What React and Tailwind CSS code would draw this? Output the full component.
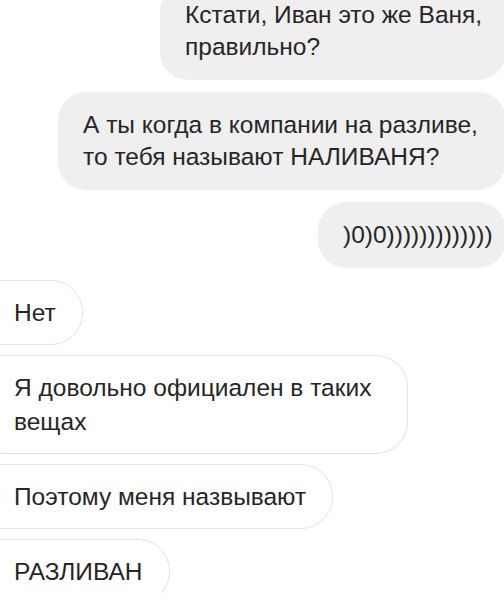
import React from 'react';

const outgoing = [
  { id: 1, text: 'Кстати, Иван это же Ваня, правильно?', width: 'w-[346px]', extra: '-mt-[18px]' },
  { id: 2, text: 'А ты когда в компании на разливе, то тебя называют НАЛИВАНЯ?', width: 'w-[448px]', extra: '' },
  { id: 3, text: ')0)0)))))))))))))', width: 'w-[188px]', extra: 'whitespace-nowrap' },
];

const incoming = [
  { id: 4, text: 'Нет', width: '' },
  { id: 5, text: 'Я довольно официален в таких вещах', width: 'w-[438px]' },
  { id: 6, text: 'Поэтому меня назвывают', width: '' },
  { id: 7, text: 'РАЗЛИВАН', width: '' },
];

const App = () => {
  return (
    <div
      className="h-[593px] w-[504px] overflow-hidden bg-white text-[24.5px] text-[#262626]"
      style={{ fontFamily: '"Liberation Sans", Arial, sans-serif' }}
    >
      <div className="flex flex-col gap-[12px]">
        {/* Sent messages */}
        {outgoing.map(msg => (
          <div
            key={msg.id}
            className={`self-end -mr-[2px] rounded-[28px] bg-[#efefef] py-[17px] pl-[25px] pr-[18px] leading-[32px] ${msg.width} ${msg.extra}`}
          >
            {msg.text}
          </div>
        ))}

        {/* Received messages */}
        <div className="flex flex-col gap-[10px]">
          {incoming.map(msg => (
            <div
              key={msg.id}
              className={`self-start -ml-[30px] rounded-[32px] border-[1.5px] border-[#e3e3e3] bg-white py-[14.5px] pl-[43px] pr-[26px] leading-[34px] ${msg.width}`}
            >
              {msg.text}
            </div>
          ))}
        </div>
      </div>
    </div>
  );
};

export default App;
